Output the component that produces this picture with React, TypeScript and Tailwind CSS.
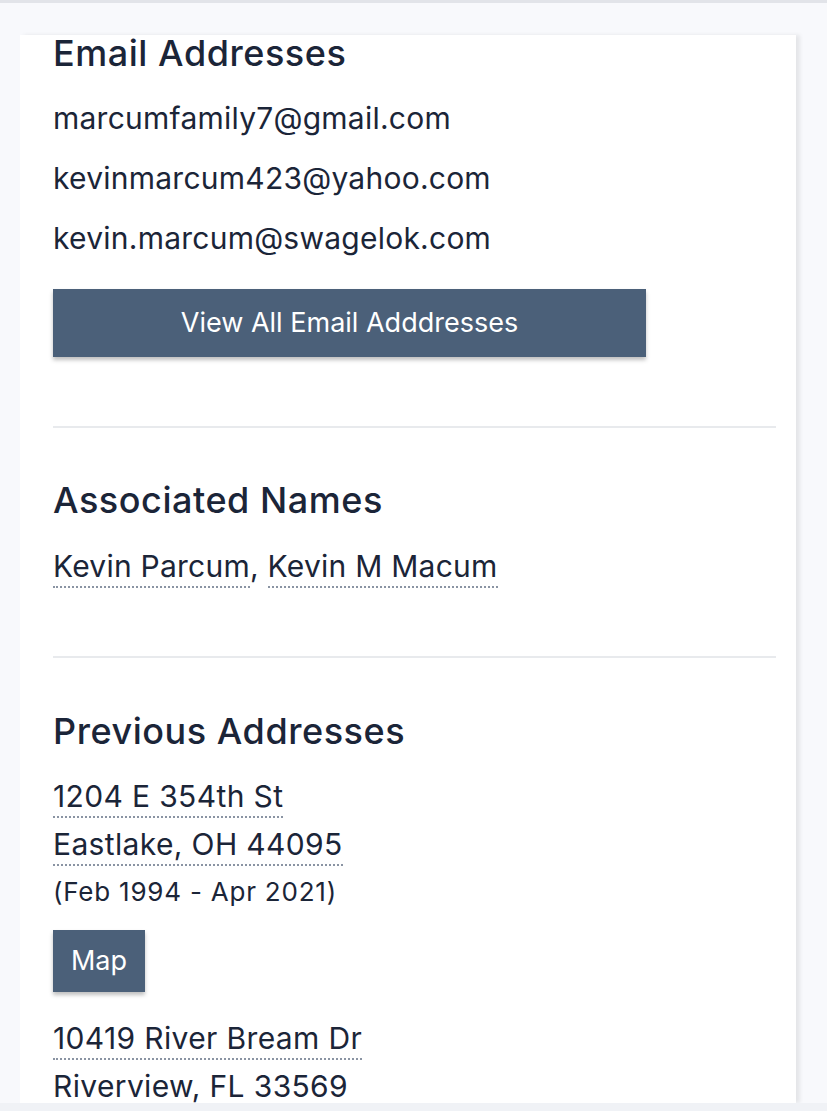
import React from "react";

const EMAILS = [
  "marcumfamily7@gmail.com",
  "kevinmarcum423@yahoo.com",
  "kevin.marcum@swagelok.com",
];

function DottedLink({ children }: { children: React.ReactNode }) {
  return (
    <span className="border-b-2 border-dotted border-[#8a94a3] pb-[2px]">
      {children}
    </span>
  );
}

export default function App() {
  return (
    <div
      className="min-h-[1111px] bg-[#f8f9fc] text-[#1b2538]"
      style={{ fontFamily: "Inter, 'Noto Sans', sans-serif" }}
    >
      <div className="h-[4px] border-t-[3px] border-[#e2e4e9]" />
      <div className="pt-[31px] pl-[20px] pr-[31px]">
        <div className="h-[1068px] bg-white pl-[33px] pr-[20px] shadow-[4px_0_4px_rgba(0,0,0,0.08)]">
          {/* Email addresses */}
          <section className="pb-[69px]">
            <h2 className="text-[36px] font-medium leading-[36px] tracking-[0.015em]">
              Email Addresses
            </h2>
            <ul className="mt-[27px] space-y-[20px] text-[30px] leading-[40px] tracking-[0.008em]">
              {EMAILS.map((e) => (
                <li key={e}>{e}</li>
              ))}
            </ul>
            <button className="mt-[31px] h-[68px] w-[593px] bg-[#4b6079] text-[27px] text-white shadow-[0_3px_4px_rgba(0,0,0,0.25)]">
              View All Email Adddresses
            </button>
          </section>

          <hr className="border-t-2 border-[#e8eaed]" />

          {/* Associated names */}
          <section className="pt-[52px] pb-[70px]">
            <h2 className="text-[36px] font-medium leading-[40px] tracking-[0.015em]">
              Associated Names
            </h2>
            <p className="mt-[26px] text-[30px] leading-[40px] tracking-[0.008em]">
              <DottedLink>Kevin Parcum</DottedLink>,{" "}
              <DottedLink>Kevin M Macum</DottedLink>
            </p>
          </section>

          <hr className="border-t-2 border-[#e8eaed]" />

          {/* Previous addresses */}
          <section className="pt-[53px]">
            <h2 className="text-[36px] font-medium leading-[40px] tracking-[0.015em]">
              Previous Addresses
            </h2>
            <div className="mt-[21px] text-[30px] leading-[48px] tracking-[0.012em]">
              <div>
                <DottedLink>1204 E 354th St</DottedLink>
              </div>
              <div>
                <DottedLink>Eastlake, OH 44095</DottedLink>
              </div>
            </div>
            <div className="mt-[4px] text-[26px] leading-[40px] tracking-[0.03em]">
              (Feb 1994 - Apr 2021)
            </div>
            <button className="mt-[18px] h-[62px] w-[92px] bg-[#4b6079] text-[27px] text-white shadow-[0_3px_4px_rgba(0,0,0,0.25)]">
              Map
            </button>
            <div className="mt-[22px] text-[30px] leading-[48px] tracking-[0.012em]">
              <div>
                <DottedLink>10419 River Bream Dr</DottedLink>
              </div>
              <div>Riverview, FL 33569</div>
            </div>
          </section>
        </div>
      </div>
      <div className="h-[8px] bg-[#f0f2f6]" />
    </div>
  );
}
